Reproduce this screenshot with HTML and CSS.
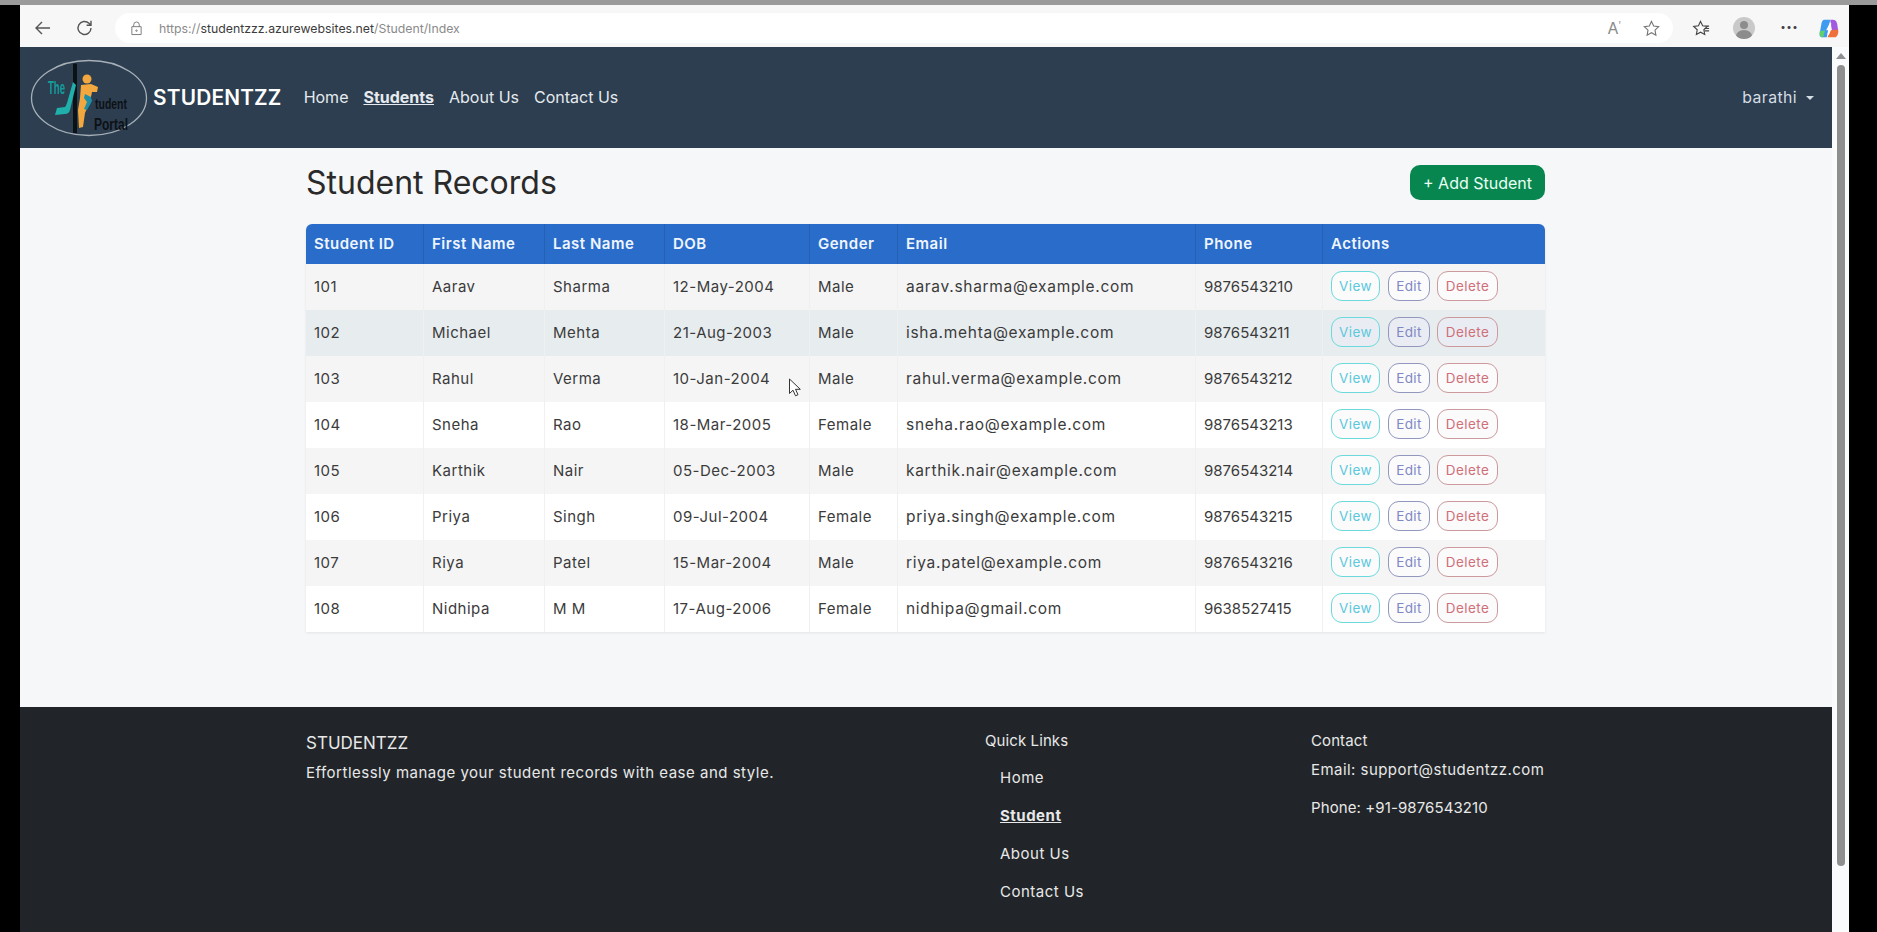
FILE: index.html
```html
<!DOCTYPE html>
<html lang="en">
<head>
    <meta charset="UTF-8">
    <meta name="viewport" content="width=device-width, initial-scale=1.0">
    <title>Student Records</title>
    <link rel="stylesheet" href="styles.css">
</head>
<body>
    <div class="window">
        <!-- browser toolbar -->
        <div class="toolbar">
            <svg class="tool-icon" viewBox="0 0 20 20"><path d="M17 10H3.500M9 4l-6 6 6 6"/></svg>
            <svg class="tool-icon reload" viewBox="0 0 20 20"><path d="M16 10a6.500 6.500 0 1 1-2-4.700L16 7.200M16 2.800v4.400h-4.400"/></svg>
            <div class="address">
                <svg class="lock" viewBox="0 0 14 16"><path d="M4 6V4a3 3 0 0 1 6 0v2M2 6h10v8.500H2z"/><circle cx="7" cy="10.300" r="0.800"/></svg>
                <span class="url"><span class="url-dim">https://</span>studentzzz.azurewebsites.net<span class="url-dim">/Student/Index</span></span>
                <span class="read-aloud">A<sup>ꞌ</sup></span>
                <svg class="tool-icon small" viewBox="0 0 20 20"><path d="M10 2.500l2.300 4.900 5.200.7-3.800 3.600.9 5.300-4.600-2.600-4.600 2.600.9-5.300-3.800-3.600 5.200-.7z"/></svg>
            </div>
            <div class="tools-right">
                <svg class="tool-icon small dark" viewBox="0 0 20 20"><path d="M9 2.500l2.200 4.600 5 .7-3.700 3.500.9 5-4.400-2.400-4.400 2.400.9-5L1.800 7.800l5-.7zM13 10h5M13.500 12.500h4.500M14 7.500h4"/></svg>
                <div class="avatar"><span class="avatar-head"></span><span class="avatar-body"></span></div>
                <span class="dots">···</span>
                <svg class="copilot" viewBox="0 0 24 24">
                    <path d="M7 2h7l-4 20H5q-4 0-3-5l2-11q1-4 3-4z" fill="#3f9bf0"/>
                    <path d="M14 2h3q4 0 5 5l1 7-7 1z" fill="#a25ae0"/>
                    <path d="M2 15l6-1-2 8H4q-3-2-2-7z" fill="#5fd06a"/>
                    <path d="M14 14l9-1q1 6-3 9h-9z" fill="#f0703c"/>
                    <path d="M14.500 6l-3.500 7h3l-2.500 6" stroke="#fff" stroke-width="2" fill="none"/>
                </svg>
            </div>
        </div>

        <div class="viewport">
            <div class="page">
                <nav class="navbar">
                    <svg class="logo" viewBox="0 0 120 80">
                        <ellipse cx="60" cy="40" rx="57.500" ry="37.500" fill="none" stroke="#a7b0b7" stroke-width="1.300"/>
                        <path d="M46 5.500V75" stroke="#0c1116" stroke-width="4"/>
                        <path d="M44 24l3 3-6 25q-1 4-5 4l-10 1 2-7 8-1q1-1 2-4z" fill="#1fb0ac"/>
                        <circle cx="58" cy="21" r="4.500" fill="#f2a73f"/>
                        <path d="M52 27l10-1 7 3-1 5h-5l-2 10-5 11-2 14-4 1-1-18 2-12z" fill="#f2a73f"/>
                        <path d="M56 36l6 3 1 4-5 9-3-1 3-7-3-4z" fill="#1f8fa8"/>
                        <text x="19" y="36" class="logo-the" textLength="17" lengthAdjust="spacingAndGlyphs">The</text>
                        <text x="66" y="51" class="logo-word" textLength="32" lengthAdjust="spacingAndGlyphs">tudent</text>
                        <text x="65" y="72" class="logo-word portal" textLength="34" lengthAdjust="spacingAndGlyphs">Portal</text>
                    </svg>
                    <a class="brand" href="#">STUDENTZZ</a>
                    <ul class="nav-links">
                        <li><a href="#">Home</a></li>
                        <li><a href="#" class="active">Students</a></li>
                        <li><a href="#">About Us</a></li>
                        <li><a href="#">Contact Us</a></li>
                    </ul>
                    <a class="user-menu" href="#">barathi<span class="caret"></span></a>
                </nav>

                <main class="content">
                    <div class="content-head">
                        <h1>Student Records</h1>
                        <a class="btn-add" href="#">+ Add Student</a>
                    </div>

                    <table class="records">
                        <colgroup>
                            <col class="c-id"><col class="c-first"><col class="c-last"><col class="c-dob">
                            <col class="c-gender"><col class="c-email"><col class="c-phone"><col class="c-actions">
                        </colgroup>
                        <thead>
                            <tr>
                                <th>Student ID</th><th>First Name</th><th>Last Name</th><th>DOB</th>
                                <th>Gender</th><th>Email</th><th>Phone</th><th>Actions</th>
                            </tr>
                        </thead>
                        <tbody>
                            <tr>
                                <td>101</td><td>Aarav</td><td>Sharma</td><td>12-May-2004</td><td>Male</td>
                                <td class="email">aarav.sharma@example.com</td><td class="phone">9876543210</td>
                                <td class="actions"><a class="btn view">View</a><a class="btn edit">Edit</a><a class="btn del">Delete</a></td>
                            </tr>
                            <tr class="hovered">
                                <td>102</td><td>Michael</td><td>Mehta</td><td>21-Aug-2003</td><td>Male</td>
                                <td class="email">isha.mehta@example.com</td><td class="phone">9876543211</td>
                                <td class="actions"><a class="btn view">View</a><a class="btn edit">Edit</a><a class="btn del">Delete</a></td>
                            </tr>
                            <tr>
                                <td>103</td><td>Rahul</td><td>Verma</td><td>10-Jan-2004</td><td>Male</td>
                                <td class="email">rahul.verma@example.com</td><td class="phone">9876543212</td>
                                <td class="actions"><a class="btn view">View</a><a class="btn edit">Edit</a><a class="btn del">Delete</a></td>
                            </tr>
                            <tr>
                                <td>104</td><td>Sneha</td><td>Rao</td><td>18-Mar-2005</td><td>Female</td>
                                <td class="email">sneha.rao@example.com</td><td class="phone">9876543213</td>
                                <td class="actions"><a class="btn view">View</a><a class="btn edit">Edit</a><a class="btn del">Delete</a></td>
                            </tr>
                            <tr>
                                <td>105</td><td>Karthik</td><td>Nair</td><td>05-Dec-2003</td><td>Male</td>
                                <td class="email">karthik.nair@example.com</td><td class="phone">9876543214</td>
                                <td class="actions"><a class="btn view">View</a><a class="btn edit">Edit</a><a class="btn del">Delete</a></td>
                            </tr>
                            <tr>
                                <td>106</td><td>Priya</td><td>Singh</td><td>09-Jul-2004</td><td>Female</td>
                                <td class="email">priya.singh@example.com</td><td class="phone">9876543215</td>
                                <td class="actions"><a class="btn view">View</a><a class="btn edit">Edit</a><a class="btn del">Delete</a></td>
                            </tr>
                            <tr>
                                <td>107</td><td>Riya</td><td>Patel</td><td>15-Mar-2004</td><td>Male</td>
                                <td class="email">riya.patel@example.com</td><td class="phone">9876543216</td>
                                <td class="actions"><a class="btn view">View</a><a class="btn edit">Edit</a><a class="btn del">Delete</a></td>
                            </tr>
                            <tr>
                                <td>108</td><td>Nidhipa</td><td>M M</td><td>17-Aug-2006</td><td>Female</td>
                                <td class="email">nidhipa@gmail.com</td><td class="phone">9638527415</td>
                                <td class="actions"><a class="btn view">View</a><a class="btn edit">Edit</a><a class="btn del">Delete</a></td>
                            </tr>
                        </tbody>
                    </table>
                </main>

                <footer class="footer">
                    <div class="foot-about">
                        <h5>STUDENTZZ</h5>
                        <p>Effortlessly manage your student records with ease and style.</p>
                    </div>
                    <div class="foot-links">
                        <h6>Quick Links</h6>
                        <ul>
                            <li><a href="#">Home</a></li>
                            <li><a href="#" class="active">Student</a></li>
                            <li><a href="#">About Us</a></li>
                            <li><a href="#">Contact Us</a></li>
                        </ul>
                    </div>
                    <div class="foot-contact">
                        <h6>Contact</h6>
                        <p>Email: support@studentzz.com</p>
                        <p class="foot-phone">Phone: +91-9876543210</p>
                    </div>
                </footer>
            </div>

            <div class="scrollbar">
                <span class="scroll-up"></span>
                <span class="scroll-thumb"></span>
            </div>
        </div>

        <!-- mouse pointer in the recording -->
        <svg class="pointer" viewBox="0 0 14 20"><path d="M1.500 1v14.500l3.500-3.300 2.500 5.600 2.500-1.100-2.500-5.400h4.800z"/></svg>
    </div>
</body>
</html>
```

FILE: styles.css
```css
* {
    box-sizing: border-box;
}
html, body {
    margin: 0;
    height: 100%;
    overflow: hidden;
}
body {
    background-color: #000;
    font-family: Inter, 'Noto Sans', sans-serif;
    color: #222;
}
a {
    text-decoration: none;
    color: inherit;
}
ul {
    list-style: none;
    margin: 0;
    padding: 0;
}
.window {
    position: relative;
    height: 932px;
    padding: 0 28px 0 20px;
    display: flex;
    flex-direction: column;
    border-top: 5px solid #9a9a9a;
}

/* browser toolbar */
.toolbar {
    height: 42px;
    flex-shrink: 0;
    background-color: #f7f7f7;
    display: flex;
    align-items: center;
    padding: 4px 0 0 13px;
}
.tool-icon {
    width: 20px;
    height: 20px;
    flex-shrink: 0;
    fill: none;
    stroke: #555;
    stroke-width: 1.4;
}
.tool-icon.reload {
    margin-left: 22px;
}
.tool-icon.small {
    width: 19px;
    height: 19px;
    stroke: #777;
    stroke-width: 1.2;
}
.tool-icon.dark {
    stroke: #444;
}
.address {
    width: 1558px;
    flex-shrink: 0;
    height: 30px;
    margin-left: 20px;
    background-color: #fff;
    border-radius: 15px;
    display: flex;
    align-items: center;
    padding: 0 12px 0 15px;
}
.lock {
    width: 13px;
    height: 15px;
    fill: none;
    stroke: #777;
    stroke-width: 1;
}
.url {
    margin-left: 16px;
    font-size: 12.300px;
    color: #3c3c3c;
    flex: 1;
}
.url-dim {
    color: #8a8a8a;
}
.read-aloud {
    font-size: 16px;
    color: #8a8a8a;
    margin-right: 21px;
}
.read-aloud sup {
    font-size: 9px;
}
.tools-right {
    display: flex;
    align-items: center;
    flex: 1;
    padding-left: 19px;
    gap: 19px;
}
.avatar {
    width: 22px;
    height: 22px;
    border-radius: 50%;
    background-color: #c9c9c9;
    position: relative;
    overflow: hidden;
    margin-left: 3px;
}
.avatar-head {
    position: absolute;
    left: 7px;
    top: 4px;
    width: 8px;
    height: 8px;
    border-radius: 50%;
    background-color: #8c8c8c;
}
.avatar-body {
    position: absolute;
    left: 3px;
    top: 13px;
    width: 16px;
    height: 12px;
    border-radius: 50%;
    background-color: #8c8c8c;
}
.dots {
    font-size: 18px;
    font-weight: 700;
    color: #444;
    margin-left: 6px;
    line-height: 1;
}
.copilot {
    width: 21px;
    height: 21px;
    margin-left: 1px;
}

.viewport {
    flex: 1;
    min-height: 0;
    display: flex;
    background-color: #f9fbfd;
}
.page {
    flex: 1;
    min-width: 0;
    display: flex;
    flex-direction: column;
    background-color: #f6f7f9;
    overflow: hidden;
}
.scrollbar {
    width: 17px;
    flex-shrink: 0;
    padding: 6px 3px 0;
    display: flex;
    flex-direction: column;
    align-items: center;
}
.scroll-up {
    width: 0;
    height: 0;
    border-left: 5px solid transparent;
    border-right: 5px solid transparent;
    border-bottom: 6px solid #8f8f8f;
}
.scroll-thumb {
    margin-top: 6px;
    width: 8px;
    height: 801px;
    background-color: #8f8f8f;
    border-radius: 4px;
}

/* navbar */
.navbar {
    height: 101px;
    flex-shrink: 0;
    background-color: #2c3e50;
    display: flex;
    align-items: center;
    padding: 0 18px 0 9px;
    color: #fff;
}
.logo {
    width: 120px;
    height: 80px;
    flex-shrink: 0;
}
.logo-the {
    font-family: 'Liberation Sans', sans-serif;
    font-size: 18px;
    font-weight: 700;
    fill: #159c9c;
}
.logo-word {
    font-family: 'Liberation Sans', sans-serif;
    font-size: 14px;
    font-weight: 700;
    fill: #0c1116;
}
.logo-word.portal {
    font-size: 16px;
}
.brand {
    margin-left: 4px;
    font-size: 20.800px;
    font-weight: 600;
    letter-spacing: 0.2px;
}
.nav-links {
    display: flex;
    margin-left: 22px;
    padding-bottom: 1px;
    gap: 15px;
    font-size: 16px;
    color: #e6eaee;
}
.nav-links .active {
    font-weight: 700;
    text-decoration: underline;
}
.user-menu {
    margin-left: auto;
    padding-bottom: 1px;
    font-size: 15.800px;
    letter-spacing: 0.4px;
    color: #d5dde4;
}
.caret {
    display: inline-block;
    margin-left: 9px;
    vertical-align: 3px;
    border-top: 4px solid #d5dde4;
    border-left: 4px solid transparent;
    border-right: 4px solid transparent;
}

/* main */
.content {
    width: 1239px;
    margin-left: 286px;
    height: 559px;
    flex-shrink: 0;
}
.content-head {
    height: 76px;
    display: flex;
    align-items: flex-start;
    justify-content: space-between;
    padding-top: 17px;
}
h1 {
    margin: 0;
    font-size: 32px;
    font-weight: 400;
    line-height: 36px;
    color: #2a2a2a;
}
.btn-add {
    background-color: #07874f;
    color: #e9fff4;
    font-size: 16px;
    height: 35px;
    width: 135px;
    display: flex;
    align-items: center;
    justify-content: center;
    border-radius: 10px;
}
.records {
    width: 100%;
    table-layout: fixed;
    border-collapse: separate;
    border-spacing: 0;
    font-size: 15px;
    letter-spacing: 0.5px;
    background-color: #fff;
    box-shadow: 0 1px 3px rgba(0,0,0,0.08);
    border-radius: 6px 6px 0 0;
}
.c-id { width: 118px; }
.c-first { width: 121px; }
.c-last { width: 120px; }
.c-dob { width: 145px; }
.c-gender { width: 88px; }
.c-email { width: 298px; }
.c-phone { width: 127px; }
.c-actions { width: 222px; }
.records th {
    height: 40px;
    background-color: #2a6cc9;
    color: #eef5ff;
    text-align: left;
    font-weight: 600;
    padding: 0 8px 2px;
    border-right: 1px solid #2560b3;
}
.records th:first-child {
    border-top-left-radius: 6px;
}
.records th:last-child {
    border-top-right-radius: 6px;
    border-right: none;
}
.records td {
    height: 46px;
    padding: 0 8px 2px;
    color: #3b3b3b;
    border-right: 1px solid #f0f0f0;
    white-space: nowrap;
}
.records td.email {
    font-size: 15.500px;
    letter-spacing: 0.7px;
}
.records td.phone {
    letter-spacing: 0;
}
.records td.actions {
    border-right: none;
    padding-bottom: 2px;
    letter-spacing: 0.4px;
}
.records tbody tr:nth-child(odd) td {
    background-color: #f5f5f6;
}
.records tbody tr.hovered td {
    background-color: #e7ecef;
}
.btn {
    display: inline-flex;
    align-items: center;
    justify-content: center;
    height: 30px;
    margin-right: 7px;
    border: 1.500px solid;
    border-radius: 11px;
    font-size: 13.500px;
    background-color: #fbfbfc;
}
.btn.view {
    width: 49px;
    margin-right: 8px;
    color: #5cc8dc;
    border-color: #6cd9dc;
}
.btn.edit {
    width: 42px;
    color: #7f88c4;
    border-color: #9297bd;
}
.btn.del {
    width: 61px;
    margin-right: 0;
    color: #cf6f78;
    border-color: #cc9a9d;
}
.hovered .btn {
    background-color: #e9edf3;
}

/* footer */
.footer {
    flex: 1;
    background-color: #212529;
    color: #e8e8e8;
    display: flex;
    padding: 15px 0 0 286px;
    font-size: 15px;
    letter-spacing: 0.5px;
}
.footer h5 {
    margin: 9px 0 8px;
    font-size: 17px;
    font-weight: 400;
    line-height: 24px;
    letter-spacing: 0;
}
.footer h6 {
    margin: 8px 0 0;
    font-size: 15px;
    font-weight: 400;
    line-height: 22px;
    letter-spacing: 0.1px;
}
.footer p {
    margin: 0;
}
.foot-about {
    width: 679px;
}
.foot-links {
    width: 326px;
}
.foot-links ul {
    margin-top: 7px;
    padding-left: 15px;
}
.foot-links li {
    height: 38px;
    line-height: 38px;
}
.foot-links .active {
    font-weight: 700;
    text-decoration: underline;
}
.foot-contact p {
    margin-top: 7px;
    height: 31px;
    line-height: 22px;
    letter-spacing: 0.45px;
}
.foot-contact .foot-phone {
    letter-spacing: 0.1px;
}

.pointer {
    position: absolute;
    left: 788px;
    top: 373px;
    width: 14px;
    height: 20px;
    fill: #fff;
    stroke: #333;
    stroke-width: 1;
}
```
